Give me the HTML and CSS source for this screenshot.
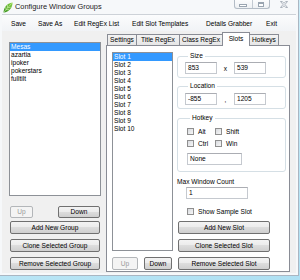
FILE: index.html
```html
<!DOCTYPE html>
<html>
<head>
<meta charset="utf-8">
<title>Configure Window Groups</title>
<link rel="stylesheet" href="styles.css">
</head>
<body>
<div class="window">
  <div class="titlebar">
    <svg class="appicon" width="10" height="11" viewBox="0 0 10 11">
      <defs>
        <linearGradient id="lf" x1="0" y1="1" x2="1" y2="0">
          <stop offset="0" stop-color="#2f8a1c"/>
          <stop offset="1" stop-color="#8fd84a"/>
        </linearGradient>
      </defs>
      <path d="M0.5 10.5 C0.8 5.5 3.5 1.2 9.6 0.4 C9.4 6 6.2 9.6 0.5 10.5 Z" fill="url(#lf)"/>
      <path d="M0.8 10.2 L8.6 1.4 M3 7.6 L2.6 4.6 M4.6 5.8 L4.4 3 M3 7.6 L6 7.6 M4.6 5.8 L7.6 5.4" stroke="#d9f5b0" stroke-width="0.6" fill="none"/>
    </svg>
    <span class="title">Configure Window Groups</span>
    <div class="captions">
      <div class="minmax">
        <div class="capbtn"><span class="minglyph"></span></div>
        <div class="capbtn"><span class="maxglyph"></span></div>
      </div>
      <div class="closebtn">
        <svg width="8" height="7" viewBox="0 0 8 7">
          <path d="M0.5 0.5 H2.3 L4 2.3 L5.7 0.5 H7.5 L5 3.5 L7.5 6.5 H5.7 L4 4.7 L2.3 6.5 H0.5 L3 3.5 Z" fill="#f4f6f8" stroke="#8f9aa6" stroke-width="0.7"/>
        </svg>
      </div>
    </div>
  </div>
  <div class="client">
    <div class="menubar">
      <span class="mi mi-save">Save</span>
      <span class="mi mi-saveas">Save As</span>
      <span class="mi mi-regex">Edit RegEx List</span>
      <span class="mi mi-slot">Edit Slot Templates</span>
      <span class="mi mi-details">Details Grabber</span>
      <span class="mi mi-exit">Exit</span>
    </div>
    <div class="main">
      <div class="leftcol">
        <div class="listbox groups">
          <div class="item sel">Mesas</div>
          <div class="item">azartia</div>
          <div class="item">ipoker</div>
          <div class="item">pokerstars</div>
          <div class="item">fulltilt</div>
        </div>
        <div class="updown left-ud">
          <button class="btn dis up-l">Up</button>
          <button class="btn down-l">Down</button>
        </div>
        <button class="btn wide first">Add New Group</button>
        <button class="btn wide">Clone Selected Group</button>
        <button class="btn wide">Remove Selected Group</button>
      </div>
      <div class="tabctl">
        <div class="tabstrip">
          <div class="tab t-settings">Settings</div>
          <div class="tab t-title">Title RegEx</div>
          <div class="tab t-class">Class RegEx</div>
          <div class="tab t-slots active">Slots</div>
          <div class="tab t-hotkeys">Hotkeys</div>
        </div>
        <div class="panel">
          <div class="slotcol">
            <div class="listbox slots">
              <div class="item sel">Slot 1</div>
              <div class="item">Slot 2</div>
              <div class="item">Slot 3</div>
              <div class="item">Slot 4</div>
              <div class="item">Slot 5</div>
              <div class="item">Slot 6</div>
              <div class="item">Slot 7</div>
              <div class="item">Slot 8</div>
              <div class="item">Slot 9</div>
              <div class="item">Slot 10</div>
            </div>
            <div class="updown slot-ud">
              <button class="btn dis up-s">Up</button>
              <button class="btn down-s">Down</button>
            </div>
          </div>
          <div class="rightcol">
            <div class="group g-size">
              <span class="legend">Size</span>
              <div class="pair">
                <div class="tb tb-pair">853</div>
                <span class="sep">x</span>
                <div class="tb tb-pair">539</div>
              </div>
            </div>
            <div class="group g-loc">
              <span class="legend">Location</span>
              <div class="pair">
                <div class="tb tb-pair">-855</div>
                <span class="sep">,</span>
                <div class="tb tb-pair">1205</div>
              </div>
            </div>
            <div class="group g-hot">
              <span class="legend">Hotkey</span>
              <div class="chkgrid">
                <label class="chk"><span class="box"></span>Alt</label>
                <label class="chk"><span class="box"></span>Shift</label>
                <label class="chk"><span class="box"></span>Ctrl</label>
                <label class="chk"><span class="box"></span>Win</label>
              </div>
              <div class="tb tb-none">None</div>
            </div>
            <div class="lbl-max">Max Window Count</div>
            <div class="tb tb-max">1</div>
            <label class="chk chk-sample"><span class="box"></span>Show Sample Slot</label>
            <button class="btn slotbtn first-s">Add New Slot</button>
            <button class="btn slotbtn">Clone Selected Slot</button>
            <button class="btn slotbtn">Remove Selected Slot</button>
          </div>
        </div>
      </div>
    </div>
  </div>
</div>
</body>
</html>
```
FILE: styles.css
```css
* { box-sizing: border-box; }

html, body {
  margin: 0;
  width: 300px;
  height: 280px;
  overflow: hidden;
}

body {
  background: linear-gradient(160deg, #d6f1fb 0%, #bde7f6 60%, #aee0f3 100%);
  font-family: "Liberation Sans", Arial, sans-serif;
  font-size: 6.6px;
  color: #000;
}

.window {
  width: 299px;
  height: 276px;
  background: #f6f8fa;
  border-right: 1px solid #aab6c2;
  border-bottom: 1px solid #aab6c2;
  display: flex;
  flex-direction: column;
}

/* title bar */
.titlebar {
  height: 14px;
  display: flex;
  align-items: center;
  padding-left: 3px;
  flex: none;
}
.appicon { flex: none; margin-top: 0; }
.title {
  font-size: 7.4px;
  margin-left: 2px;
  color: #1a1a1a;
  line-height: 14px;
}
.captions {
  margin-left: auto;
  align-self: flex-start;
  display: flex;
}
.minmax {
  width: 36px;
  height: 9px;
  display: flex;
  border: 1px solid #b3bcc6;
  border-top: none;
  border-radius: 0 0 3px 3px;
  background: linear-gradient(#fbfcfd, #eef1f4);
}
.capbtn {
  flex: 1;
  display: flex;
  justify-content: center;
  align-items: center;
}
.capbtn + .capbtn { border-left: 1px solid #c3cad2; }
.minglyph {
  width: 8px;
  height: 3px;
  border: 1px solid #9aa5b1;
  background: #fff;
  margin-top: 3px;
}
.maxglyph {
  width: 6px;
  height: 5px;
  border: 1px solid #9aa5b1;
  border-top-width: 2px;
  background: #fff;
}
.closebtn {
  width: 28px;
  height: 9px;
  display: flex;
  justify-content: center;
  align-items: center;
}

/* client */
.client {
  flex: 1;
  margin: 0 2px 2px 2px;
  border-top: 1px solid #cdd2d8;
  background: #f0f0f0;
  display: flex;
  flex-direction: column;
}

.menubar {
  height: 16px;
  flex: none;
  display: flex;
  align-items: center;
  padding-left: 9px;
  background: linear-gradient(#fbfcfd, #f1f3f6);
}
.mi { white-space: nowrap; }
.mi-save { width: 27px; }
.mi-saveas { width: 36px; }
.mi-regex { width: 58px; }
.mi-slot { width: 74px; }
.mi-details { width: 60px; }

.main {
  flex: 1;
  display: flex;
  padding-left: 7px;
}

/* left column */
.leftcol {
  width: 92px;
  padding-top: 11px;
  display: flex;
  flex-direction: column;
}
.listbox {
  background: #fff;
  border: 1px solid #8d9197;
}
.listbox.groups { height: 154px; }
.item {
  height: 8px;
  line-height: 8px;
  padding-left: 1px;
  white-space: nowrap;
}
.item.sel {
  background: #3399ff;
  color: #fff;
}

.updown { display: flex; }
.left-ud { margin-top: 10px; padding-left: 1px; }
.slot-ud { margin-top: 6px; }

.btn {
  font: inherit;
  color: #000;
  margin: 0;
  padding: 0;
  height: 13px;
  line-height: 11px;
  border: 1px solid #707070;
  border-radius: 2px;
  background: linear-gradient(#f3f3f3 0%, #ebebeb 50%, #dddddd 50%, #cfcfcf 100%);
  text-align: center;
  white-space: nowrap;
}
.btn.dis {
  border-color: #b3b6b9;
  background: #f4f4f4;
  color: #9a9a9a;
}
.left-ud .btn { height: 12px; line-height: 10px; }
.up-l { width: 23px; }
.down-l { width: 42px; margin-left: 25px; }
.btn.wide {
  width: 90px;
  margin-left: 1px;
  margin-top: 5px;
}
.btn.wide.first { margin-top: 3px; }

/* tab control */
.tabctl {
  width: 184px;
  margin-left: 5px;
  padding-top: 1px;
  display: flex;
  flex-direction: column;
}
.tabstrip {
  height: 13px;
  display: flex;
  align-items: flex-end;
  padding-left: 1px;
}
.tab {
  height: 11px;
  line-height: 10px;
  text-align: center;
  border: 1px solid #898c95;
  border-bottom: none;
  margin-right: -1px;
  background: linear-gradient(#f3f3f3, #e6e6e6);
  white-space: nowrap;
}
.tab.active {
  height: 14px;
  margin-bottom: -1px;
  line-height: 12px;
  background: #fff;
  position: relative;
  z-index: 1;
}
.t-settings { width: 30px; }
.t-title { width: 44px; }
.t-class { width: 44px; }
.t-slots { width: 28px; }
.t-hotkeys { width: 30px; }

.panel {
  height: 227px;
  border: 1px solid #898c95;
  background: #fff;
  display: flex;
  padding: 6px 0 0 5px;
}
.slotcol {
  width: 61px;
  display: flex;
  flex-direction: column;
}
.listbox.slots { height: 199px; }
.slot-ud .btn { height: 13px; }
.up-s { width: 26px; }
.down-s { width: 28px; margin-left: 6px; }

.rightcol {
  width: 109px;
  margin-left: 4px;
  padding-top: 4px;
  display: flex;
  flex-direction: column;
}

.group {
  border: 1px solid #d5dfe5;
  border-radius: 3px;
  padding-left: 7px;
}
.legend {
  display: table;
  margin: -6px 0 0 3px;
  padding: 0 2px;
  line-height: 9px;
  background: #fff;
}
.g-size { padding-bottom: 3px; }
.g-size .pair { margin-top: 2px; }
.g-loc { margin-top: 8px; padding-bottom: 3px; }
.g-loc .pair { margin-top: 3px; }
.g-hot { margin-top: 9px; padding-left: 9px; padding-bottom: 6px; }

.pair { display: flex; align-items: center; }
.sep { width: 17px; text-align: center; }

.tb {
  height: 12px;
  line-height: 10px;
  padding-left: 2px;
  background: #fff;
  border: 1px solid #c5c9cf;
  border-top-color: #abadb3;
  white-space: nowrap;
}
.tb-pair { width: 32px; }
.tb-none { width: 55px; margin-top: 6px; }
.tb-max { width: 62px; margin-left: 9px; margin-top: 1px; }

.chkgrid {
  margin-top: 5px;
  display: grid;
  grid-template-columns: 28px 28px;
  row-gap: 4px;
}
.chk {
  display: flex;
  align-items: center;
  height: 8px;
  white-space: nowrap;
}
.box {
  width: 7px;
  height: 7px;
  margin-right: 4px;
  border: 1px solid #8f8f8f;
  background: linear-gradient(135deg, #d8dade, #f7f7f7);
  flex: none;
}

.lbl-max {
  margin-top: 5px;
  line-height: 9px;
}
.chk-sample {
  margin-top: 8px;
  margin-left: 10px;
  height: 9px;
}

.btn.slotbtn {
  width: 92px;
  margin-left: 1px;
  margin-top: 5px;
}
```
